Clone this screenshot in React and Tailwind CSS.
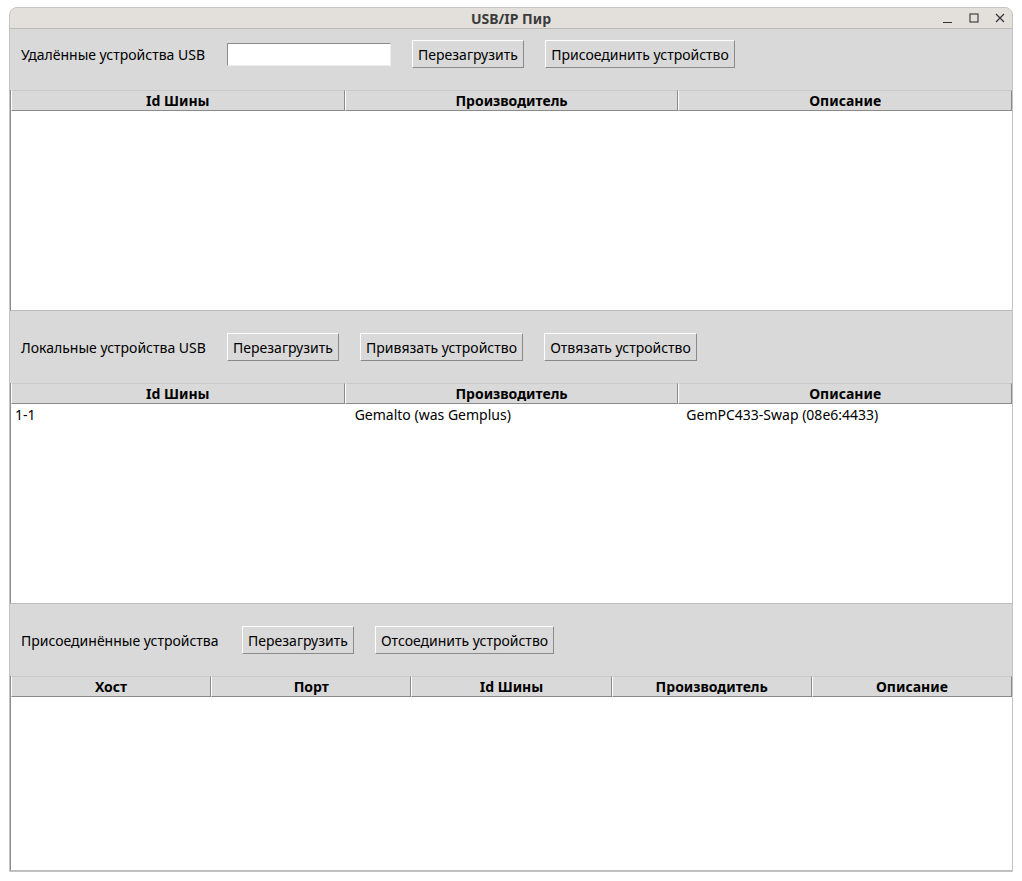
const font = { fontFamily: '"Noto Sans", "Open Sans", sans-serif' };

function Button({ children, w }) {
  return (
    <div
      className={`h-[28px] ${w} flex items-center justify-center bg-[#d9d9d9] border border-t-white border-l-white border-r-[#8a8a8a] border-b-[#8a8a8a] text-[14px] text-black shrink-0`}
    >
      {children}
    </div>
  );
}

function Toolbar({ label, children, className = "" }) {
  return (
    <div className={`flex items-center pl-[11px] gap-[21px] ${className}`}>
      {label}
      {children}
    </div>
  );
}

function Table({ columns, rows = [], height }) {
  return (
    <div className={`${height} flex flex-col bg-white border-l border-[#8d8d8d] border-b border-b-[#bdbdbd]`}>
      <div className="flex h-[21px] shrink-0">
        {columns.map((c) => (
          <div
            key={c}
            className="flex-1 flex items-center justify-center bg-[#d9d9d9] border border-t-[#c9c9c9] border-l-white border-r-[#8a8a8a] border-b-[#8a8a8a] text-[14px] font-bold text-black"
          >
            {c}
          </div>
        ))}
      </div>
      {rows.map((r, i) => (
        <div key={i} className="flex h-[21px] items-center text-[14px] text-black">
          {r.map((cell, j) => (
            <div key={j} className={`flex-1 ${["pl-[4px]", "pl-[14px]", "pl-[6px]"][j]}`}>
              {cell}
            </div>
          ))}
        </div>
      ))}
    </div>
  );
}

export default function App() {
  return (
    <div className="w-[1022px] h-[881px] bg-white pt-[7px] pl-[9px]" style={font}>
      <div className="w-[1004px] h-[865px] border border-[#c4c4c4] rounded-t-[8px] overflow-hidden flex flex-col bg-[#d9d9d9]">
        {/* title bar */}
        <div className="h-[21px] shrink-0 bg-[#e3e0dc] border-b border-[#bcbab6] relative flex items-center justify-center">
          <span className="text-[14px] font-bold text-[#3b3b3b]">USB/IP Пир</span>
          <div className="absolute right-[6px] top-0 h-full flex items-center gap-[14px] text-[#333]">
            <svg width="12" height="12" viewBox="0 0 12 12">
              <path d="M1 10.5h9" stroke="#333" strokeWidth="1.2" />
            </svg>
            <svg width="12" height="12" viewBox="0 0 12 12">
              <rect x="2" y="2" width="8" height="8" fill="none" stroke="#333" strokeWidth="1.1" />
            </svg>
            <svg width="12" height="12" viewBox="0 0 12 12">
              <path d="M2 2l8 8M10 2l-8 8" stroke="#333" strokeWidth="1.2" />
            </svg>
          </div>
        </div>

        {/* remote */}
        <Toolbar
          className="h-[61px] pb-[11px]"
          label={<span className="text-[14px] text-black w-[185px] whitespace-nowrap">Удалённые устройства USB</span>}
        >
          <div className="w-[164px] h-[23px] bg-white border border-t-[#8a8a8a] border-l-[#8a8a8a] border-r-[#eeeeee] border-b-[#eeeeee]" />
          <Button w="w-[112px]">Перезагрузить</Button>
          <Button w="w-[190px]">Присоединить устройство</Button>
        </Toolbar>
        <Table columns={["Id Шины", "Производитель", "Описание"]} height="h-[221px]" />

        {/* local */}
        <Toolbar
          className="h-[72px]"
          label={<span className="text-[14px] text-black w-[185px] whitespace-nowrap">Локальные устройства USB</span>}
        >
          <Button w="w-[112px]">Перезагрузить</Button>
          <Button w="w-[163px]">Привязать устройство</Button>
          <Button w="w-[153px]">Отвязать устройство</Button>
        </Toolbar>
        <Table
          columns={["Id Шины", "Производитель", "Описание"]}
          rows={[["1-1", "Gemalto (was Gemplus)", "GemPC433-Swap (08e6:4433)"]]}
          height="h-[221px]"
        />

        {/* attached */}
        <Toolbar
          className="h-[72px]"
          label={<span className="text-[14px] text-black w-[200px] whitespace-nowrap">Присоединённые устройства</span>}
        >
          <Button w="w-[112px]">Перезагрузить</Button>
          <Button w="w-[179px]">Отсоединить устройство</Button>
        </Toolbar>
        <Table
          columns={["Хост", "Порт", "Id Шины", "Производитель", "Описание"]}
          height="flex-1"
        />
      </div>
    </div>
  );
}
